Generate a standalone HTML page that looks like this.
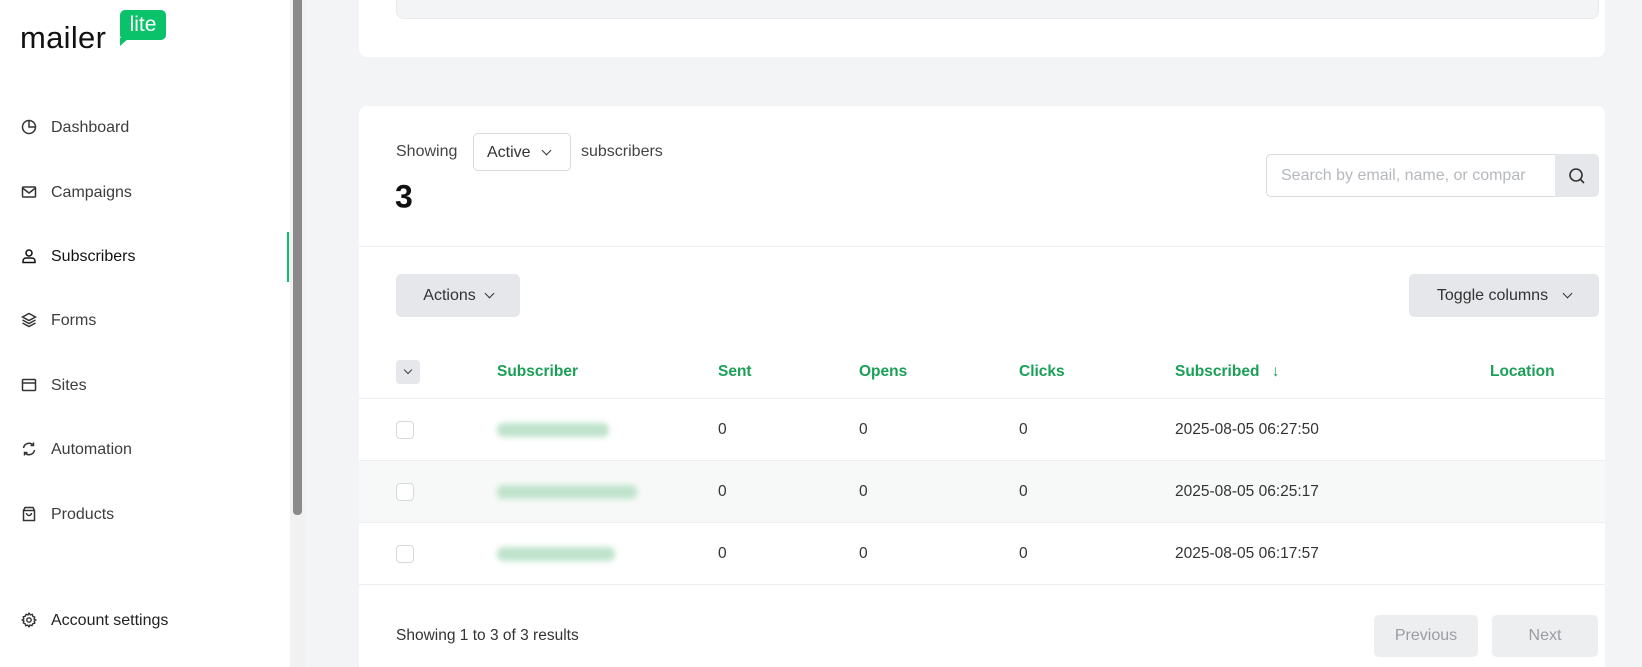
<!DOCTYPE html>
<html style="width:1642px;height:667px;overflow:hidden"><head><meta charset="utf-8"><style>
*{box-sizing:border-box;margin:0;padding:0}
body{width:1642px;height:667px;overflow:hidden;background:#f3f4f6;font-family:"Liberation Sans",sans-serif;color:#333;position:relative;font-size:15.5px}
.abs{position:absolute}
.side{left:0;top:0;width:290px;height:667px;background:#fff}
.nav{position:absolute;left:21px;display:flex;align-items:center;gap:14px;color:#3d3d3d;font-size:16px;transform:translateY(-50%)}
.nav svg{width:16px;height:16px;position:relative;top:-1px}
.card{background:#fff;border-radius:8px;left:359px;width:1246px}
.btn{background:#e5e7eb;border-radius:5px;display:flex;align-items:center;justify-content:center;gap:10px;color:#333;font-size:16px}
.th{position:absolute;top:372px;transform:translateY(-50%);color:#1a9f57;font-weight:bold;font-size:15.5px}
.row{position:absolute;left:359px;width:1246px;height:62px;border-bottom:1px solid #eee}
.cell{position:absolute;top:50%;transform:translateY(-50%);color:#333}
.cb{position:absolute;left:37px;top:50%;margin-top:-9px;width:18px;height:18px;border:1px solid #d5d8dc;border-radius:4px;background:#fff}
.blur{position:absolute;top:50%;margin-top:-7px;left:138px;height:14px;background:#bfe3cc;border-radius:6px;filter:blur(3px)}
</style></head><body>
<div class="abs side">
  <div class="abs" style="left:20px;top:20px;font-size:31px;color:#111;letter-spacing:0.3px">mailer</div>
  <div class="abs" style="left:120px;top:10px;width:46px;height:30px;background:#09c269;border-radius:5px;color:#fff;font-size:21px;text-align:center;line-height:29px">lite</div>
  <div class="abs" style="left:120px;top:38px;width:0;height:0;border-right:9px solid transparent;border-top:8px solid #09c269"></div>
  <div class="nav" style="top:128px"><svg viewBox="0 0 16 16" fill="none" stroke="#333" stroke-width="1.5"><circle cx="8" cy="8" r="6.5"/><path d="M8 1.5V8h6.5"/></svg>Dashboard</div>
  <div class="nav" style="top:193px"><svg viewBox="0 0 16 16" fill="none" stroke="#333" stroke-width="1.5"><rect x="1.5" y="3" width="13" height="10" rx="1"/><path d="M1.5 4l6.5 5 6.5-5"/></svg>Campaigns</div>
  <div class="nav" style="top:257px;color:#111"><svg viewBox="0 0 16 16" fill="none" stroke="#111" stroke-width="1.5"><circle cx="8" cy="5" r="3"/><path d="M2 14.5v-1.5a3 3 0 013-3h6a3 3 0 013 3v1.5z"/></svg>Subscribers</div>
  <div class="nav" style="top:321px"><svg viewBox="0 0 16 16" fill="none" stroke="#333" stroke-width="1.5"><path d="M8 1.5l6.5 3.5L8 8.5 1.5 5z"/><path d="M1.5 8L8 11.5 14.5 8"/><path d="M1.5 11L8 14.5 14.5 11"/></svg>Forms</div>
  <div class="nav" style="top:386px"><svg viewBox="0 0 16 16" fill="none" stroke="#333" stroke-width="1.5"><rect x="1.5" y="2.5" width="13" height="11" rx="1"/><path d="M1.5 6h13"/></svg>Sites</div>
  <div class="nav" style="top:450px"><svg viewBox="0 0 16 16" fill="none" stroke="#333" stroke-width="1.5"><path d="M2.5 7a5.5 5.5 0 019.8-2.5M13.5 9a5.5 5.5 0 01-9.8 2.5"/><path d="M12.5 1.5v3h-3M3.5 14.5v-3h3"/></svg>Automation</div>
  <div class="nav" style="top:515px"><svg viewBox="0 0 16 16" fill="none" stroke="#333" stroke-width="1.5"><path d="M2.5 4.5h11v10h-11zM2.5 4.5L4 1.5h8l1.5 3"/><path d="M5.5 7a2.5 2.5 0 005 0"/></svg>Products</div>
  <div class="nav" style="top:621px;color:#222"><svg viewBox="0 0 16 16" fill="none" stroke="#333" stroke-width="1.4"><circle cx="8" cy="8" r="2.2"/><path d="M8 1.2l1.3 1.6 2-.5.5 2 1.9.8-.6 2L14.8 8l-1.6 1.3.5 2-2 .5-.8 1.9-2-.6L8 14.8l-1.3-1.6-2 .5-.5-2-1.9-.8.6-2L1.2 8l1.6-1.3-.5-2 2-.5.8-1.9 2 .6z"/></svg>Account settings</div>
  <div class="abs" style="left:287px;top:232px;width:2px;height:50px;background:#09c269"></div>
</div>
<div class="abs" style="left:290px;top:0;width:15px;height:667px;background:#f1f1f1"></div>
<div class="abs" style="left:293px;top:0;width:9px;height:515px;background:#8a8a8a;border-radius:0 0 4px 4px"></div>

<div class="abs card" style="top:-10px;height:67px">
  <div class="abs" style="left:37px;top:0;width:1203px;height:29px;background:#f3f4f6;border:1px solid #e8e9ec;border-radius:8px"></div>
</div>

<div class="abs card" style="top:106px;height:561px;border-radius:8px 8px 0 0"></div>
<div class="abs" style="left:396px;top:152px;transform:translateY(-50%);font-size:16px;color:#444">Showing</div>
<div class="abs" style="left:473px;top:133px;width:98px;height:38px;border:1px solid #d8dadd;border-radius:5px;font-size:16px;color:#333;padding:10px 0 0 13px">Active <span style="display:inline-block;margin-left:8px;width:7px;height:7px;border-right:1.5px solid #333;border-bottom:1.5px solid #333;transform:rotate(45deg);position:relative;top:-3px"></span></div>
<div class="abs" style="left:581px;top:152px;transform:translateY(-50%);font-size:16px;color:#444">subscribers</div>
<div class="abs" style="left:395px;top:197px;transform:translateY(-50%);font-size:32px;font-weight:bold;color:#111">3</div>
<div class="abs" style="left:1266px;top:154px;width:290px;height:43px;border:1px solid #d8dadd;border-radius:5px 0 0 5px;color:#b5b8bd;font-size:16px;padding:12px 0 0 14px;white-space:nowrap;overflow:hidden">Search by email, name, or compar</div>
<div class="abs" style="left:1555px;top:154px;width:44px;height:43px;background:#e5e7eb;border-radius:0 5px 5px 0"><svg style="position:absolute;left:13px;top:13px" width="18" height="18" viewBox="0 0 18 18" fill="none" stroke="#333" stroke-width="1.6"><circle cx="8" cy="8" r="6"/><path d="M12.5 12.5L16 16"/></svg></div>
<div class="abs" style="left:359px;top:246px;width:1246px;height:1px;background:#f0f0f0"></div>
<div class="abs btn" style="left:396px;top:274px;width:124px;height:43px">Actions <span style="width:7px;height:7px;border-right:1.5px solid #333;border-bottom:1.5px solid #333;transform:rotate(45deg);margin-top:-4px"></span></div>
<div class="abs btn" style="left:1409px;top:274px;width:190px;height:43px">Toggle columns <span style="width:7px;height:7px;border-right:1.5px solid #333;border-bottom:1.5px solid #333;transform:rotate(45deg);margin-top:-4px;margin-left:6px"></span></div>

<div class="abs" style="left:396px;top:360px;width:24px;height:24px;background:#e5e7eb;border-radius:4px"><span style="position:absolute;left:9px;top:7px;width:6px;height:6px;border-right:1.5px solid #444;border-bottom:1.5px solid #444;transform:rotate(45deg)"></span></div>
<div class="th" style="left:497px">Subscriber</div>
<div class="th" style="left:718px">Sent</div>
<div class="th" style="left:859px">Opens</div>
<div class="th" style="left:1019px">Clicks</div>
<div class="th" style="left:1175px">Subscribed <span style="margin-left:8px">↓</span></div>
<div class="th" style="left:1490px">Location</div>
<div class="abs" style="left:359px;top:398px;width:1246px;height:1px;background:#eee"></div>

<div class="row" style="top:399px"><div class="cb"></div><div class="blur" style="width:112px"></div><div class="cell" style="left:359px">0</div><div class="cell" style="left:500px">0</div><div class="cell" style="left:660px">0</div><div class="cell" style="left:816px">2025-08-05 06:27:50</div></div>
<div class="row" style="top:461px;background:#f7f9f8"><div class="cb"></div><div class="blur" style="width:140px"></div><div class="cell" style="left:359px">0</div><div class="cell" style="left:500px">0</div><div class="cell" style="left:660px">0</div><div class="cell" style="left:816px">2025-08-05 06:25:17</div></div>
<div class="row" style="top:523px"><div class="cb"></div><div class="blur" style="width:118px"></div><div class="cell" style="left:359px">0</div><div class="cell" style="left:500px">0</div><div class="cell" style="left:660px">0</div><div class="cell" style="left:816px">2025-08-05 06:17:57</div></div>

<div class="abs" style="left:396px;top:636px;transform:translateY(-50%);color:#333">Showing <b style="font-weight:500">1</b> to <b style="font-weight:500">3</b> of <b style="font-weight:500">3</b> results</div>
<div class="abs btn" style="left:1374px;top:615px;width:104px;height:42px;background:#eceef0;color:#9a9da2">Previous</div>
<div class="abs btn" style="left:1492px;top:615px;width:106px;height:42px;background:#eceef0;color:#9a9da2">Next</div>
</body></html>
